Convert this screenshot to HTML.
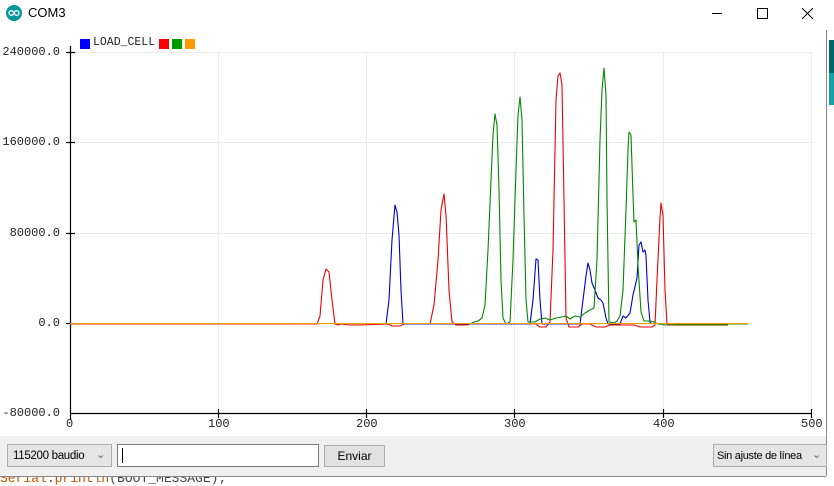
<!DOCTYPE html>
<html><head><meta charset="utf-8"><style>
body{margin:0;width:834px;height:480px;overflow:hidden;background:#fff;position:relative;font-family:"Liberation Sans",sans-serif}
.abs{position:absolute}
.mono{font-family:"Liberation Mono",monospace;font-size:12px;color:#222}
.btn{position:absolute;background:#e1e1e1;border:1px solid #adadad;box-sizing:border-box;font-size:12px;color:#000;display:flex;align-items:center;white-space:nowrap;overflow:hidden}
</style></head><body>
<svg class="abs" style="left:6px;top:5px" width="16" height="16" viewBox="0 0 16 16"><circle cx="8" cy="8" r="8" fill="#00979d"/><circle cx="5.3" cy="8" r="2.3" fill="none" stroke="#fff" stroke-width="1.3"/><circle cx="10.7" cy="8" r="2.3" fill="none" stroke="#fff" stroke-width="1.3"/></svg>
<div class="abs" style="left:28px;top:5px;font-size:13px;color:#000">COM3</div>
<div class="abs" style="left:712px;top:13px;width:10px;height:1px;background:#000"></div>
<div class="abs" style="left:757px;top:8px;width:9px;height:9px;border:1px solid #000"></div>
<svg class="abs" style="left:802px;top:8px" width="11" height="11"><path d="M0 0L11 11M11 0L0 11" stroke="#000" stroke-width="1"/></svg>
<div class="abs" style="left:826px;top:30px;width:1px;height:446px;background:#888"></div>
<div class="abs" style="left:829px;top:40px;width:5px;height:65px;background:#00666a"></div>
<div class="abs" style="left:829px;top:73px;width:5px;height:32px;background:#17a1a5"></div>
<div class="abs" style="left:80px;top:39px;width:10px;height:10px;background:#00f"></div>
<div class="abs mono" style="left:93px;top:36px;font-size:11.5px">LOAD_CELL</div>
<div class="abs" style="left:159px;top:39px;width:10px;height:10px;background:#f00"></div>
<div class="abs" style="left:172px;top:39px;width:10px;height:10px;background:#090"></div>
<div class="abs" style="left:185px;top:39px;width:10px;height:10px;background:#f90"></div>
<div class="abs mono" style="right:774px;top:45px">240000.0</div>
<div class="abs mono" style="right:774px;top:135px">160000.0</div>
<div class="abs mono" style="right:774px;top:226px">80000.0</div>
<div class="abs mono" style="right:774px;top:316px">0.0</div>
<div class="abs mono" style="right:774px;top:406px">-80000.0</div>
<div class="abs mono" style="left:66px;top:417px">0</div>
<div class="abs mono" style="left:208px;top:417px">100</div>
<div class="abs mono" style="left:356px;top:417px">200</div>
<div class="abs mono" style="left:504px;top:417px">300</div>
<div class="abs mono" style="left:653px;top:417px">400</div>
<div class="abs mono" style="left:801px;top:417px">500</div>
<svg class="abs" style="left:0;top:0" width="834" height="480">
<g stroke="#ebebeb" stroke-width="1">
<line x1="70" y1="52.5" x2="811" y2="52.5"/><line x1="70" y1="142.5" x2="811" y2="142.5"/><line x1="70" y1="233.5" x2="811" y2="233.5"/>
<line x1="218.5" y1="52" x2="218.5" y2="413"/><line x1="366.5" y1="52" x2="366.5" y2="413"/><line x1="514.5" y1="52" x2="514.5" y2="413"/><line x1="663.5" y1="52" x2="663.5" y2="413"/><line x1="811.5" y1="52" x2="811.5" y2="413"/>
</g>
<g stroke="#000" stroke-width="1.2">
<line x1="70.5" y1="46" x2="70.5" y2="420"/><line x1="70" y1="413.5" x2="811" y2="413.5"/>
<line x1="66" y1="52.5" x2="75" y2="52.5"/><line x1="66" y1="142.5" x2="75" y2="142.5"/><line x1="66" y1="233.5" x2="75" y2="233.5"/><line x1="66" y1="323.5" x2="75" y2="323.5"/>
<line x1="218.5" y1="409" x2="218.5" y2="418"/><line x1="366.5" y1="409" x2="366.5" y2="418"/><line x1="514.5" y1="409" x2="514.5" y2="418"/><line x1="663.5" y1="409" x2="663.5" y2="418"/><line x1="811.5" y1="409" x2="811.5" y2="418"/>
</g>
<g fill="none" stroke-width="1.1" stroke-linejoin="round">
<polyline stroke="#e00" points="70,324 317,324 320,316 323,280 326,269 329,272 332,300 335,324 338,325 341,324 349,325 360,325 388,324 392,326 400,326 404,324 430,324 434,305 438,260 441,210 444,194 446,215 449,290 452,322 456,325 467,325 470,324 536,324 540,327 546,327 550,322 553,250 556,100 558,76 560,73 562,85 564,200 566,318 569,327 578,327 582,324 590,324 596,327 605,327 610,325 634,325 640,327 652,327 655,325 657,280 660,218 661,203 663,215 665,290 667,324 670,325 725,325"/>
<polyline stroke="#00c" points="386,324 389,300 392,240 395,205 397,212 399,235 401,290 403,324 405,324 530,324 533,300 536,259 538,260 540,300 542,324 580,324 583,300 586,276 588,263 590,270 592,283 595,290 598,298 601,300 603,303 606,318 608,324 620,324 623,316 626,318 630,313 633,295 637,278 639,245 641,242 643,252 645,250 646,256 648,300 650,322 652,324"/>
<polyline stroke="#080" points="470,324 474,322 478,321 482,318 485,305 488,250 491,180 493,135 495,114 497,125 499,190 501,280 503,318 506,324 510,322 513,260 516,170 518,115 520,97 522,120 524,215 526,300 528,322 535,322 540,319 545,318 550,320 556,318 562,317 566,316 570,319 575,316 580,317 585,313 590,310 594,308 597,260 600,140 602,90 604,68 606,95 607,200 609,322 614,323 617,321 620,316 623,290 626,210 628,150 629,132 631,135 633,195 634,222 636,220 638,265 641,312 644,321 650,321 654,322 658,324 665,325 690,324 748,324"/>
<line x1="70" y1="323.6" x2="748" y2="323.6" stroke="#e8a000" stroke-width="1.1"/>
<line x1="668" y1="325" x2="728" y2="325" stroke="#6a5a00" stroke-width="1.3"/>
</g>
</svg>
<div class="abs" style="left:0;top:471px;font-family:'Liberation Mono',monospace;font-size:13px;color:#444;white-space:nowrap"><span style="color:#c25400">Serial</span>.<span style="color:#c25400">println</span>(BOOT_MESSAGE);</div>
<div class="abs" style="left:0;top:436px;width:826px;height:40px;background:#f0f0f0;border-bottom:1px solid #888"></div>
<div class="btn" style="left:7px;top:444px;width:105px;height:23px;padding-left:5px;background:#e5e5e5;border-color:#acacac;font-size:11.5px;letter-spacing:-0.3px">115200 baudio<span style="position:absolute;right:6px;top:3px;color:#666;font-size:11px">&#8964;</span></div>
<div class="abs" style="left:117px;top:444px;width:202px;height:23px;box-sizing:border-box;background:#fff;border:1px solid #7a7a7a"></div>
<div class="abs" style="left:122px;top:448px;width:1px;height:15px;background:#000"></div>
<div class="btn" style="left:324px;top:445px;width:61px;height:22px;justify-content:center">Enviar</div>
<div class="btn" style="left:713px;top:444px;width:114px;height:23px;padding-left:3px;background:#e5e5e5;border-color:#acacac;font-size:11px;letter-spacing:-0.3px">Sin ajuste de línea<span style="position:absolute;right:5px;top:3px;color:#666;font-size:11px;background:#e5e5e5">&#8964;</span></div>
</body></html>
